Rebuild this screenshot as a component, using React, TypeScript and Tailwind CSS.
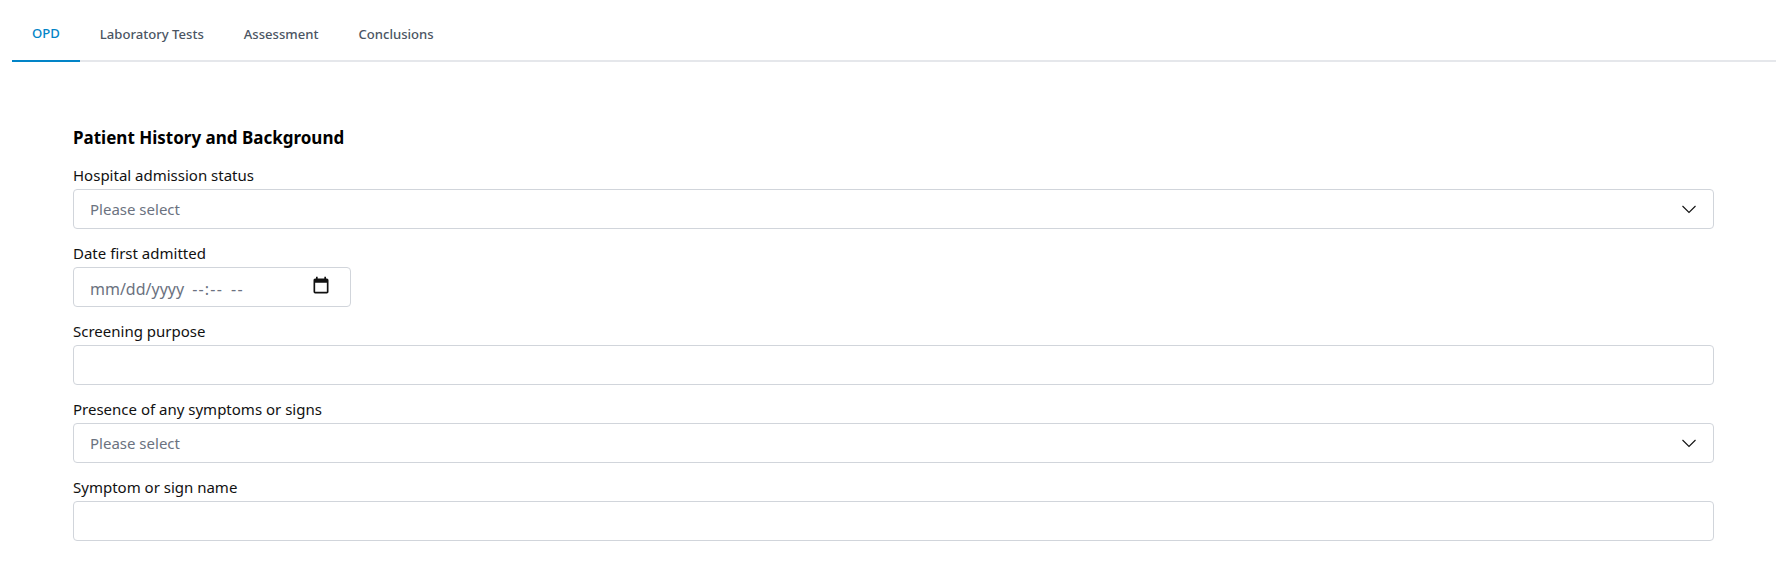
const tabs = ["OPD", "Laboratory Tests", "Assessment", "Conclusions"];

function Field({ label, children }: { label: string; children: React.ReactNode }) {
    return (
        <div className="mb-3">
            <label className="block h-[26px] text-[15px] leading-6 text-[#111]">{label}</label>
            {children}
        </div>
    );
}

function SelectBox() {
    return (
        <div className="flex h-10 items-center justify-between rounded border border-[#d1d5db] bg-white px-4">
            <span className="text-[15px] text-[#6b7280]">Please select</span>
            <svg viewBox="0 0 16 16" className="h-4 w-4" fill="none" stroke="#111" strokeWidth="1.1">
                <path d="M1.5 5l6.5 6.5L14.500 5" />
            </svg>
        </div>
    );
}

function TextBox() {
    return <input type="text" className="block h-10 w-full rounded border border-[#d1d5db] bg-white px-4 text-[15px]" />;
}

function DateBox() {
    return (
        <div className="flex h-10 w-[278px] items-center justify-between rounded border border-[#d1d5db] bg-white pl-4 pr-[19px]">
            <span className="flex gap-2 pt-1 text-[16px] text-[#6b7280]">
                <span>mm/dd/yyyy</span>
                <span className="tracking-[1.2px]">--:--</span>
                <span className="tracking-[1.2px]">--</span>
            </span>
            <svg viewBox="0 0 24 24" className="-mt-[3px] h-5 w-5" fill="#111">
                <path d="M19 3h-1V1h-2v2H8V1H6v2H5c-1.110 0-1.990.9-1.990 2L3 19a2 2 0 0 0 2 2h14c1.100 0 2-.9 2-2V5c0-1.100-.9-2-2-2zm0 16H5V8h14v11z" />
            </svg>
        </div>
    );
}

export default function App() {
    return (
        <div className="min-h-[577px] bg-white px-3 font-['Noto_Sans',sans-serif]">
            <div className="flex h-[62px] border-b-2 border-[#e5e7eb]">
                {tabs.map((tab, i) => (
                    <button
                        key={tab}
                        className={`-mb-[2px] h-[62px] px-5 pt-2 text-[13.100px] font-medium ${
                            i === 0 ? "border-b-2 border-[#0284c7] text-[#0284c7]" : "text-[#4b5563]"
                        }`}
                    >
                        {tab}
                    </button>
                ))}
            </div>

            <div className="ml-[61px] mr-[62px] pt-[62px]">
                <h2 className="mb-[11px] h-7 text-[17px] font-bold leading-7 text-black">Patient History and Background</h2>
                <Field label="Hospital admission status">
                    <SelectBox />
                </Field>
                <Field label="Date first admitted">
                    <DateBox />
                </Field>
                <Field label="Screening purpose">
                    <TextBox />
                </Field>
                <Field label="Presence of any symptoms or signs">
                    <SelectBox />
                </Field>
                <Field label="Symptom or sign name">
                    <TextBox />
                </Field>
            </div>
        </div>
    );
}
